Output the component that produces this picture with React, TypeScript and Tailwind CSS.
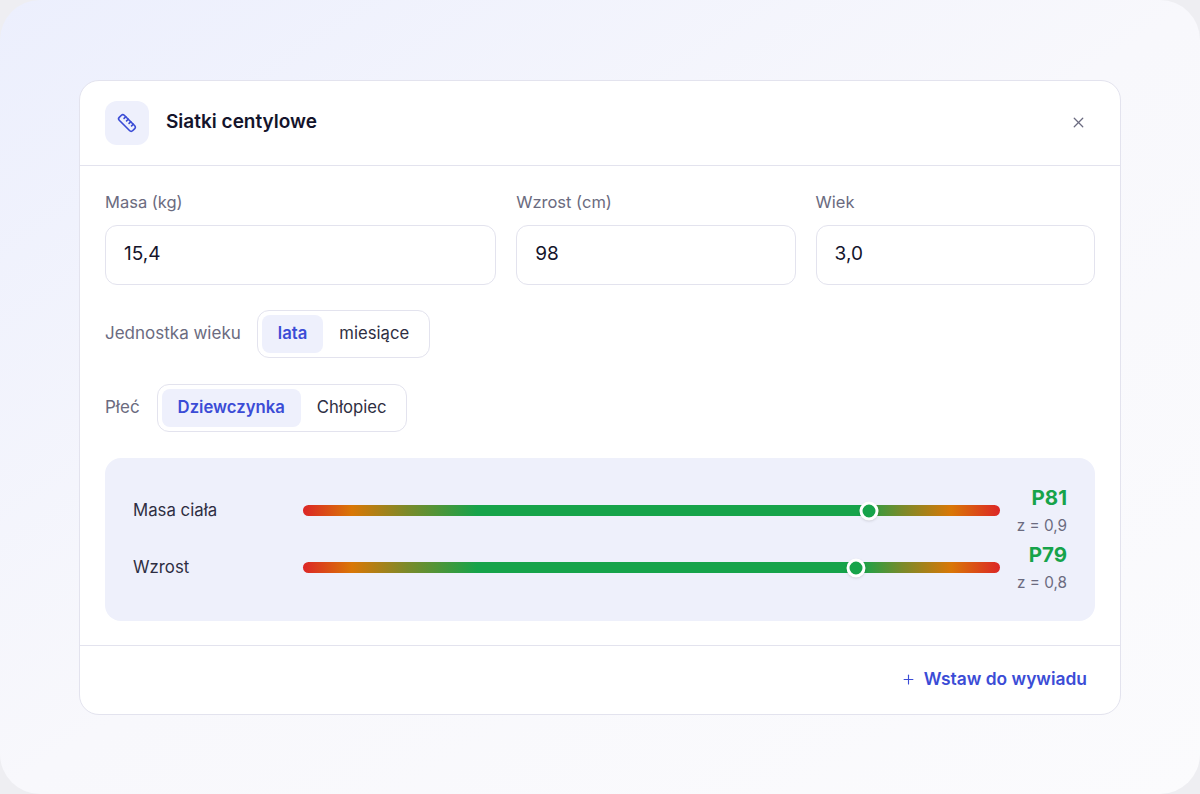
import { Ruler, X, Plus } from 'lucide-react';

const gradient =
  'linear-gradient(to right, #dc2626 0%, #d97706 7%, #7a8a2a 15%, #16a34a 25%, #16a34a 80%, #7a8a2a 86%, #d97706 93%, #dc2626 100%)';

const rows = [
  { label: 'Masa ciała', pos: 81.2, p: 'P81', z: 'z = 0,9' },
  { label: 'Wzrost', pos: 79.3, p: 'P79', z: 'z = 0,8' },
];

function Field({ label, value }: { label: string; value: string }) {
  return (
    <div className="flex flex-col">
      <label className="text-[16.5px] leading-5 text-[#6b6b80] mb-[13px]">{label}</label>
      <div className="h-[60px] rounded-xl border border-[#e3e3ee] bg-white flex items-center px-[18px] text-[19px] text-[#14142b]">
        {value}
      </div>
    </div>
  );
}

function Segmented({ options, active }: { options: string[]; active: number }) {
  return (
    <div className="flex items-center rounded-xl border border-[#e3e3ee] bg-white p-1">
      {options.map((o, i) => (
        <button
          key={o}
          className={`h-[38px] px-4 rounded-lg text-[16.7px] ${
            i === active ? 'bg-[#eef0fc] text-[#3b4cd6] font-semibold' : 'text-[#2e2e42]'
          }`}
        >
          {o}
        </button>
      ))}
    </div>
  );
}

export default function App() {
  return (
    <div className="min-h-screen bg-[#eeeef2]" style={{ fontFamily: 'Inter, "Noto Sans", sans-serif' }}>
      <div className="h-[794px] w-full rounded-[40px] bg-linear-to-br from-[#eceffd] via-[#f8f8fc] to-[#fbfbfd] flex items-center justify-center">
        <div className="w-[1042px] h-[635px] bg-white rounded-[20px] border border-[#e3e3ee] flex flex-col">
          {/* Header */}
          <header className="h-[85px] border-b border-[#e3e3ee] flex items-center px-[25px]">
            <div className="w-11 h-11 rounded-xl bg-[#eef0fc] flex items-center justify-center">
              <Ruler size={20} strokeWidth={2} className="text-[#3b4cd6]" />
            </div>
            <h1 className="ml-[17px] text-[19px] font-semibold text-[#14142b]">Siatki centylowe</h1>
            <button className="ml-auto mr-[8px] text-[#6b6b80]">
              <X size={17} strokeWidth={1.8} />
            </button>
          </header>

          {/* Body */}
          <main className="flex-1 px-[25px] pt-[26px]">
            <div className="grid grid-cols-[1.4fr_1fr_1fr] gap-5">
              <Field label="Masa (kg)" value="15,4" />
              <Field label="Wzrost (cm)" value="98" />
              <Field label="Wiek" value="3,0" />
            </div>

            <div className="mt-[25px] flex items-center gap-4">
              <span className="text-[17px] text-[#6b6b80]">Jednostka wieku</span>
              <Segmented options={['lata', 'miesiące']} active={0} />
            </div>

            <div className="mt-[26px] flex items-center gap-[17px]">
              <span className="text-[17px] text-[#6b6b80]">Płeć</span>
              <Segmented options={['Dziewczynka', 'Chłopiec']} active={0} />
            </div>

            <div className="mt-[26px] rounded-2xl bg-[#eef0fb] px-7 py-[26px] flex flex-col gap-[3px]">
              {rows.map((r) => (
                <div key={r.label} className="flex items-center">
                  <span className="w-[170px] text-[16.8px] text-[#2e2e42]">{r.label}</span>
                  <div className="relative flex-1 h-[11px] rounded-full" style={{ background: gradient }}>
                    <div
                      className="absolute top-1/2 w-[19px] h-[19px] -translate-x-1/2 -translate-y-1/2 rounded-full bg-[#16a34a] border-[3px] border-white shadow-sm"
                      style={{ left: `${r.pos}%` }}
                    />
                  </div>
                  <div className="ml-[15px] w-[52px] flex flex-col items-end">
                    <span className="text-[20.5px] leading-[28px] font-bold text-[#16a34a]">{r.p}</span>
                    <span className="mt-[2px] text-[15.3px] leading-6 text-[#6b6b80] whitespace-nowrap">{r.z}</span>
                  </div>
                </div>
              ))}
            </div>
          </main>

          {/* Footer */}
          <footer className="h-[69px] border-t border-[#e3e3ee] flex items-center justify-end px-[33px]">
            <button className="flex items-center gap-2 text-[17.4px] font-semibold text-[#3b4cd6]">
              <Plus size={15} strokeWidth={1.8} />
              Wstaw do wywiadu
            </button>
          </footer>
        </div>
      </div>
    </div>
  );
}
